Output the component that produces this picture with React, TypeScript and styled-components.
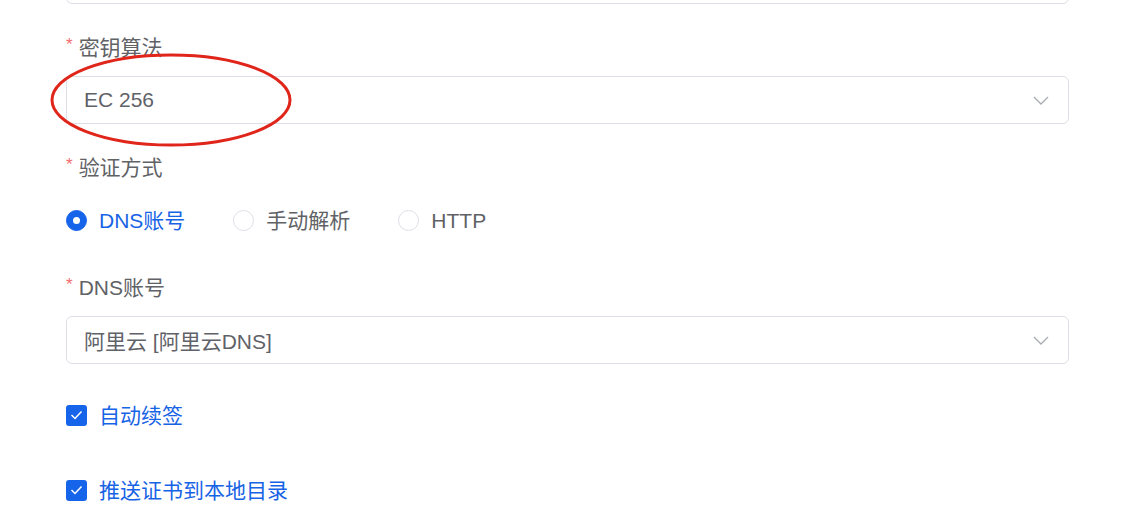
import React from 'react';
import styled, { createGlobalStyle } from 'styled-components';

const GlobalStyle = createGlobalStyle`
body {
  margin: 0;
  background: #fff;
  font-family: "Liberation Sans", "Noto Sans CJK SC", sans-serif;
  overflow: hidden;
}
`;

const Page = styled.div`
position: relative;
width: 1137px;
height: 525px;
overflow: hidden;
`;

const Form = styled.div`
width: 1003px;
margin-left: 66px;
margin-top: -44px;
display: flex;
flex-direction: column;
gap: 27px;
`;

const FormItem = styled.div`
display: flex;
flex-direction: column;
gap: 12px;
`;

const Label = styled.div`
height: 33px;
line-height: 33px;
font-size: 21px;
color: #606266;
display: flex;
align-items: center;
`;

const Star = styled.span`
color: #f56c6c;
font-size: 17px;
margin-right: 6px;
position: relative;
top: -3px;
`;

const SelectBox = styled.div`
box-sizing: border-box;
height: 48px;
border: 1px solid #dcdfe6;
border-radius: 6px;
padding: 0 19px 0 17px;
display: flex;
align-items: center;
justify-content: space-between;
font-size: 21px;
color: #5f6268;
`;

const Row = styled.div`
height: 48px;
display: flex;
align-items: center;
`;

const RadioItem = styled.div<{ $active?: boolean }>`
display: flex;
align-items: center;
gap: 12px;
margin-right: 48px;
font-size: 21px;
line-height: 1;
color: ${p => (p.$active ? '#1763e5' : '#606266')};
`;

const RadioCircle = styled.span<{ $active?: boolean }>`
box-sizing: border-box;
width: 21px;
height: 21px;
border-radius: 50%;
border: 1px solid ${p => (p.$active ? '#1664ea' : '#dcdfe6')};
background: ${p => (p.$active ? '#1664ea' : '#fff')};
display: flex;
align-items: center;
justify-content: center;
&::after {
  content: '';
  width: 7px;
  height: 7px;
  border-radius: 50%;
  background: #fff;
  display: ${p => (p.$active ? 'block' : 'none')};
}
`;

const CheckItem = styled.div`
display: flex;
align-items: center;
gap: 12px;
font-size: 21px;
line-height: 1;
color: #1763e5;
`;

const CheckBox = styled.span`
box-sizing: border-box;
width: 21px;
height: 21px;
border-radius: 3px;
background: #1664ea;
display: flex;
align-items: center;
justify-content: center;
`;

const Annotation = styled.svg`
position: absolute;
left: 48px;
top: 52px;
pointer-events: none;
`;

const Chevron = () => (
  <svg width="16" height="9" viewBox="0 0 16 9">
    <path d="M1 1 L8 8 L15 1" fill="none" stroke="#a8abb2" strokeWidth="1.3" />
  </svg>
);

const Tick = () => (
  <svg width="13" height="10" viewBox="0 0 13 10">
    <path d="M1.5 5 L5 8.5 L11.5 1.5" fill="none" stroke="#fff" strokeWidth="1.5" />
  </svg>
);

const radios = [
  { label: 'DNS账号', active: true },
  { label: '手动解析', active: false },
  { label: 'HTTP', active: false },
];

export default function App() {
  return (
    <Page>
      <GlobalStyle />
      <Form>
        <SelectBox />
        <FormItem>
          <Label><Star>*</Star>密钥算法</Label>
          <SelectBox>
            <span>EC 256</span>
            <Chevron />
          </SelectBox>
        </FormItem>
        <FormItem>
          <Label><Star>*</Star>验证方式</Label>
          <Row>
            {radios.map(r => (
              <RadioItem key={r.label} $active={r.active}>
                <RadioCircle $active={r.active} />
                {r.label}
              </RadioItem>
            ))}
          </Row>
        </FormItem>
        <FormItem>
          <Label><Star>*</Star>DNS账号</Label>
          <SelectBox>
            <span>阿里云 [阿里云DNS]</span>
            <Chevron />
          </SelectBox>
        </FormItem>
        <Row>
          <CheckItem><CheckBox><Tick /></CheckBox>自动续签</CheckItem>
        </Row>
        <Row>
          <CheckItem><CheckBox><Tick /></CheckBox>推送证书到本地目录</CheckItem>
        </Row>
      </Form>
      <Annotation width="250" height="100" viewBox="0 0 250 100">
        <ellipse cx="123" cy="48" rx="119" ry="45" fill="none" stroke="#e0251b" strokeWidth="3" />
      </Annotation>
    </Page>
  );
}
